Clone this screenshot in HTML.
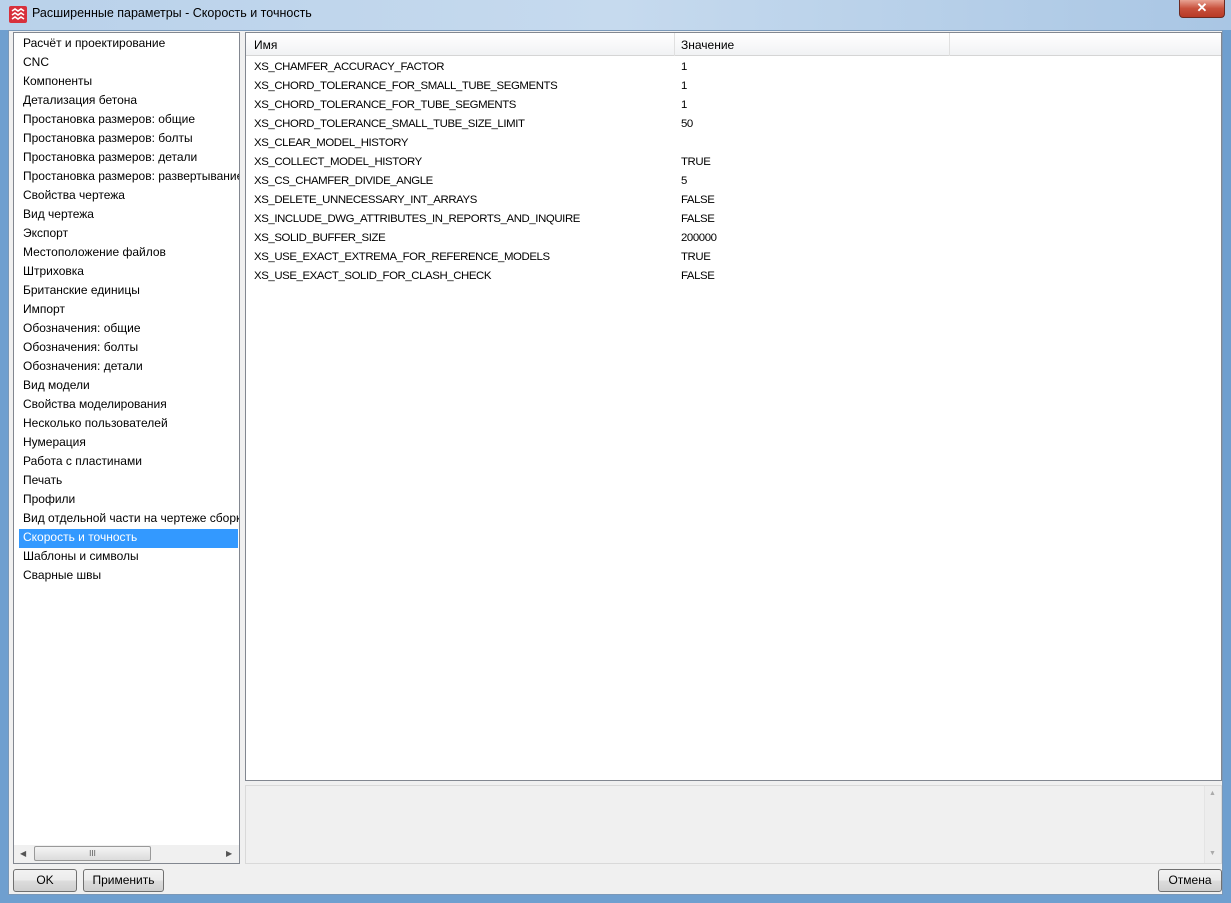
<!DOCTYPE html>
<html><head><meta charset="utf-8"><style>
*{margin:0;padding:0;box-sizing:border-box}
body{width:1231px;height:903px;overflow:hidden;background:#6f9fcf;font-family:"Liberation Sans",sans-serif;font-size:12px;color:#000;position:relative}
.title{position:absolute;left:0;top:0;width:1231px;height:30px;background:linear-gradient(90deg,#b9d1ea 0%,#c6daee 50%,#a9c6e4 100%)}
.title span{position:absolute;left:32px;top:6px;font-size:12.5px;color:#000}
.close{position:absolute;left:1179px;top:0;width:46px;height:18px;border:1px solid #6b2a22;border-top:none;border-radius:0 0 4px 4px;background:linear-gradient(#e8a393,#c8503c 50%,#b83a26);color:#fff;font-weight:bold;text-align:center;font-size:13px;line-height:16px}
.client{position:absolute;left:8px;top:30px;width:1215px;height:865px;background:#f0f0f0;border:1px solid #7a98b8}
.box{position:absolute;background:#fff;border:1px solid #828790}
.row{position:absolute;height:19px;line-height:19px;white-space:nowrap}
.t{font-size:11.4px;letter-spacing:-0.4px}
.btn{position:absolute;top:869px;height:23px;border:1px solid #707070;border-radius:3px;background:linear-gradient(#f2f2f2,#ebebeb 50%,#dddddd 51%,#cfcfcf);text-align:center;line-height:21px}
</style></head><body>
<div class="title">
<svg style="position:absolute;left:9px;top:6px" width="18" height="17"><rect width="18" height="17" rx="2" fill="#d8303c"/><path d="M3 5l3 -2 3 2 3-2 3 2M3 9l3-2 3 2 3-2 3 2M3 13l3-2 3 2 3-2 3 2" stroke="#fff" stroke-width="1.6" fill="none"/></svg>
<span>Расширенные параметры - Скорость и точность</span>
<div class="close">✕</div>
</div>
<div class="client"></div>

<div class="box" style="left:13px;top:32px;width:227px;height:832px;overflow:hidden">
<div style="position:absolute;left:5px;top:496px;width:219px;height:19px;background:#3399ff"></div>
<div id="lst"></div>
<div style="position:absolute;left:0;top:812px;width:225px;height:18px;background:#f0f0f0">
<div style="position:absolute;left:6px;top:4px;font-size:8px;color:#555">◀</div>
<div style="position:absolute;left:20px;top:1px;width:117px;height:15px;border:1px solid #999;border-radius:2px;background:linear-gradient(#f4f4f4,#dcdcdc);text-align:center;font-size:8px;line-height:13px;color:#555">III</div>
<div style="position:absolute;left:212px;top:4px;font-size:8px;color:#555">▶</div>
</div>
</div>

<div class="box" style="left:245px;top:32px;width:977px;height:749px">
<div style="position:absolute;left:0;top:0;width:975px;height:23px;background:linear-gradient(#fff,#f1f2f4);border-bottom:1px solid #d5d5d5"></div>
<div style="position:absolute;left:428px;top:0;width:1px;height:23px;background:#e0e0e0"></div>
<div style="position:absolute;left:703px;top:0;width:1px;height:23px;background:#e0e0e0"></div>
<div class="row" style="left:8px;top:3px">Имя</div>
<div class="row" style="left:435px;top:3px">Значение</div>
<div id="tbl"></div>
</div>

<div style="position:absolute;left:245px;top:785px;width:977px;height:79px;border:1px solid #d9d9d9;background:#f0f0f0">
<div style="position:absolute;right:0;top:0;width:17px;height:77px;background:#ededed;border-left:1px solid #e4e4e4">
<div style="position:absolute;left:4px;top:4px;font-size:7px;color:#aaa">▲</div>
<div style="position:absolute;left:4px;top:64px;font-size:7px;color:#aaa">▼</div>
</div>
</div>

<div class="btn" style="left:13px;width:64px">OK</div>
<div class="btn" style="left:83px;width:81px">Применить</div>
<div class="btn" style="left:1158px;width:64px">Отмена</div>

<script>
var L=["Расчёт и проектирование","CNC","Компоненты","Детализация бетона","Простановка размеров: общие","Простановка размеров: болты","Простановка размеров: детали","Простановка размеров: развертывание","Свойства чертежа","Вид чертежа","Экспорт","Местоположение файлов","Штриховка","Британские единицы","Импорт","Обозначения: общие","Обозначения: болты","Обозначения: детали","Вид модели","Свойства моделирования","Несколько пользователей","Нумерация","Работа с пластинами","Печать","Профили","Вид отдельной части на чертеже сборки","Скорость и точность","Шаблоны и символы","Сварные швы"];
var h="";L.forEach(function(t,i){h+='<div class="row" style="left:9px;top:'+(1+i*19)+'px;'+(i==26?'color:#fff':'')+'">'+t+'</div>'});
document.getElementById("lst").innerHTML=h;
var T=[["XS_CHAMFER_ACCURACY_FACTOR","1"],["XS_CHORD_TOLERANCE_FOR_SMALL_TUBE_SEGMENTS","1"],["XS_CHORD_TOLERANCE_FOR_TUBE_SEGMENTS","1"],["XS_CHORD_TOLERANCE_SMALL_TUBE_SIZE_LIMIT","50"],["XS_CLEAR_MODEL_HISTORY",""],["XS_COLLECT_MODEL_HISTORY","TRUE"],["XS_CS_CHAMFER_DIVIDE_ANGLE","5"],["XS_DELETE_UNNECESSARY_INT_ARRAYS","FALSE"],["XS_INCLUDE_DWG_ATTRIBUTES_IN_REPORTS_AND_INQUIRE","FALSE"],["XS_SOLID_BUFFER_SIZE","200000"],["XS_USE_EXACT_EXTREMA_FOR_REFERENCE_MODELS","TRUE"],["XS_USE_EXACT_SOLID_FOR_CLASH_CHECK","FALSE"]];
h="";T.forEach(function(r,i){h+='<div class="row t" style="left:8px;top:'+(25+i*19)+'px">'+r[0]+'</div><div class="row t" style="left:435px;top:'+(25+i*19)+'px">'+r[1]+'</div>'});
document.getElementById("tbl").innerHTML=h;
</script>
</body></html>
